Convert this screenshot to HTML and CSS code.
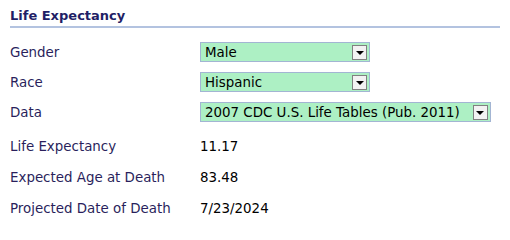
FILE: index.html
```html
<!DOCTYPE html>
<html>
<head>
<meta charset="utf-8">
<link rel="stylesheet" href="styles.css">
</head>
<body>
<div class="panel">
  <h2 class="title">Life Expectancy</h2>
  <div class="rows">
    <div class="row"><div class="label">Gender</div>
      <div class="select w170"><span class="txt">Male</span><span class="btn"><span class="tri"></span></span></div></div>
    <div class="row"><div class="label">Race</div>
      <div class="select w170"><span class="txt">Hispanic</span><span class="btn"><span class="tri"></span></span></div></div>
    <div class="row"><div class="label">Data</div>
      <div class="select"><span class="txt">2007 CDC U.S. Life Tables (Pub. 2011)</span><span class="btn"><span class="tri"></span></span></div></div>
    <div class="row res first"><div class="label">Life Expectancy</div><div class="value">11.17</div></div>
    <div class="row res"><div class="label">Expected Age at Death</div><div class="value">83.48</div></div>
    <div class="row res"><div class="label">Projected Date of Death</div><div class="value">7/23/2024</div></div>
  </div>
</div>
</body>
</html>
```
FILE: styles.css
```css
html, body { margin: 0; padding: 0; background: #fff; }
body { font-family: "DejaVu Sans", Verdana, sans-serif; font-size: 13.4px; }
.panel { padding: 4px 10px 0 10px; width: 490px; }
.title {
  margin: 0;
  font-size: 13px;
  font-weight: bold;
  color: #1f1f66;
  padding: 4px 0 3px 0;
  border-bottom: 2px solid #b3c3e0;
}
.rows { padding-top: 14px; }
.row { display: flex; align-items: center; height: 20px; margin-bottom: 10px; }
.row.res { height: 20px; margin-bottom: 11px; }
.row.first { margin-top: 14px; }
.label { width: 190px; color: #2a1f5c; }
.value { color: #000; }
.select {
  box-sizing: border-box;
  height: 20px;
  display: flex;
  align-items: center;
  background: #adf0c4;
  border: 1px solid #a3b5d3;
  padding-left: 4px;
  padding-right: 1px;
  color: #000;
  font-size: 13.4px;
}
.select.w170 { width: 170px; }
.txt { flex: 1; white-space: nowrap; padding-right: 13px; }
.btn {
  box-sizing: border-box;
  width: 15px;
  height: 15px;
  border: 1px solid #808080;
  background: #f2f2f2;
  display: flex;
  align-items: center;
  justify-content: center;
  margin-right: 1px;
}
.tri {
  width: 0; height: 0;
  border-left: 4px solid transparent;
  border-right: 4px solid transparent;
  border-top: 4px solid #000;
  margin-top: 1px;
}
```
